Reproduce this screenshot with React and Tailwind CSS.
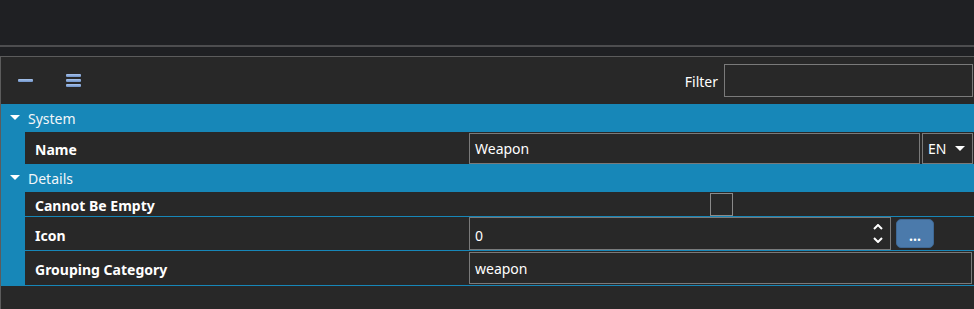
import { useState } from 'react';

const font = { fontFamily: '"Noto Sans", "Open Sans", sans-serif' };

const Caret = () => (
  <svg width="10" height="6" viewBox="0 0 10 6" className="shrink-0">
    <path d="M0 0 L10 0 L5 5 Z" fill="#ffffff" />
  </svg>
);

const SectionHeader = ({ title }) => (
  <div className="h-[28px] bg-[#1787b8] flex items-center gap-[8px] pl-[9px] text-[14px] text-[#f2f6f9]">
    <Caret />
    <span>{title}</span>
  </div>
);

const Row = ({ label, h, children, line = true }) => (
  <div className="flex bg-[#1787b8]">
    <div className="w-[24px] shrink-0" />
    <div
      className={`flex-1 flex items-center bg-[#282828] ${line ? 'border-b border-[#1787b8]' : ''}`}
      style={{ height: h }}
    >
      <div className="w-[444px] shrink-0 pl-[10px] pt-[3px] text-[14px] font-bold text-white">
        {label}
      </div>
      <div className="flex-1 flex items-center h-full pr-[1px]">{children}</div>
    </div>
  </div>
);

export default function App() {
  const [checked, setChecked] = useState(false);

  return (
    <div className="w-[974px] h-[309px] bg-[#1f2023] overflow-hidden flex flex-col" style={font}>
      <div className="h-[45px] shrink-0" />
      <div className="h-[2px] bg-[#4d4d4f] shrink-0" />
      <div className="h-[9px] shrink-0" />

      <div className="flex-1 bg-[#282828] border-t border-l border-[#5c5c5c] flex flex-col">
        {/* Toolbar */}
        <div className="h-[47px] flex items-center shrink-0">
          <button className="ml-[16px] w-[17px] h-[16px] flex items-center justify-center">
            <span className="block w-[15px] h-[3px] rounded-[1px] bg-gradient-to-b from-[#a9c4ec] to-[#6f93c9]" />
          </button>
          <button className="ml-[31px] w-[17px] h-[16px] flex flex-col justify-center gap-[2px] items-center">
            <span className="block w-[15px] h-[3px] rounded-[1px] bg-gradient-to-b from-[#a9c4ec] to-[#6f93c9]" />
            <span className="block w-[15px] h-[3px] rounded-[1px] bg-gradient-to-b from-[#a9c4ec] to-[#6f93c9]" />
            <span className="block w-[15px] h-[3px] rounded-[1px] bg-gradient-to-b from-[#a9c4ec] to-[#6f93c9]" />
          </button>
          <div className="flex-1" />
          <span className="text-[14px] text-white mr-[6px] pt-[1px]">Filter</span>
          <input className="w-[249px] h-[33px] mr-[1px] bg-[#282828] border border-[#7a7a7a] outline-none text-white text-[14px] px-[5px]" />
        </div>

        <SectionHeader title="System" />
        <Row label="Name" h={32} line={false}>
          <div className="flex-1 h-[31px] border border-[#7a7a7a] flex items-center px-[5px] pt-[1px] text-[14px] text-white">
            Weapon
          </div>
          <div className="ml-[2px] w-[51px] h-[31px] border border-[#7a7a7a] flex items-center justify-between pl-[5px] pr-[7px] pt-[1px] text-[14px] text-white">
            <span>EN</span>
            <Caret />
          </div>
        </Row>

        <SectionHeader title="Details" />
        <Row label="Cannot Be Empty" h={25}>
          <button
            onClick={() => setChecked(!checked)}
            className="ml-[241px] w-[23px] h-[23px] border border-[#8a8a8a] bg-[#282828]"
          />
        </Row>
        <Row label="Icon" h={34}>
          <div className="w-[422px] h-[33px] border border-[#7a7a7a] flex items-center justify-between pl-[5px] pr-[7px] text-[14px] text-white">
            <span className="pt-[3px]">0</span>
            <div className="flex flex-col gap-[7px]">
              <svg width="10" height="6" viewBox="0 0 10 6">
                <path d="M1 5 L5 1 L9 5" stroke="#ffffff" strokeWidth="2" fill="none" />
              </svg>
              <svg width="10" height="6" viewBox="0 0 10 6">
                <path d="M1 1 L5 5 L9 1" stroke="#ffffff" strokeWidth="2" fill="none" />
              </svg>
            </div>
          </div>
          <button className="ml-[5px] w-[38px] h-[29px] rounded-[5px] bg-[#4b7aab] border border-[#3f6894] text-white text-[14px] font-bold leading-none pt-[4px]">
            ...
          </button>
        </Row>
        <Row label="Grouping Category" h={35}>
          <div className="flex-1 h-[32px] border border-[#7a7a7a] flex items-center px-[5px] pt-[1px] text-[14px] text-white mr-[1px]">
            weapon
          </div>
        </Row>

        <div className="flex-1" />
      </div>
    </div>
  );
}
